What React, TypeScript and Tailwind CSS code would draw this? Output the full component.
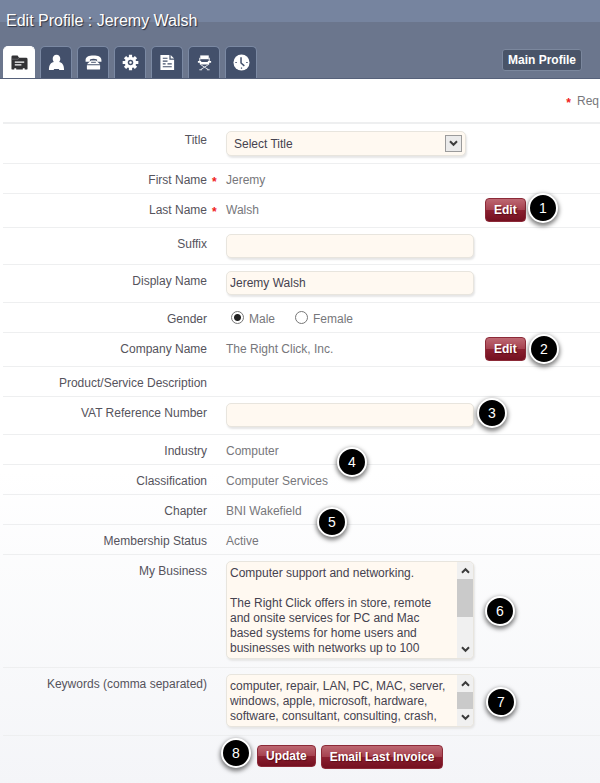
import { useState } from "react";
import type { ReactNode } from "react";
import clsx from "clsx";

const tabs = [
  {
    name: "Profile",
    icon: (
      <>
        <path d="M.5 3q0-1.500 1.500-1.500h5L8.500 4H16q1.500 0 1.500 1.500V16q0 .5-.5.5h-2.500V15h-2v1.500h-7V15h-2v1.500H1q-.5 0-.5-.5z" fill="#333336" />
        <path d="M.5 5.500h7L8.500 4" fill="none" stroke="#77777a" strokeWidth=".7" />
        <path d="M4 8.500h10M4 11.500h7" stroke="#fff" strokeWidth="1.300" />
      </>
    ),
  },
  {
    name: "Personal",
    icon: (
      <path
        d="M9 .8c2.600 0 4 1.800 4 4.200 0 1.500-.5 2.600-1.300 3.500 3.200.3 5.300 2.900 5.300 8.500h-5l-.5-1h-5l-.5 1H1c0-5.600 2.100-8.200 5.300-8.500C5.500 7.600 5 6.500 5 5 5 2.600 6.400.8 9 .8z"
        fill="#fff"
      />
    ),
  },
  {
    name: "Contact",
    icon: (
      <>
        <path
          d="M.6 6.500C.6 3 4 1.500 9 1.500s8.400 1.500 8.400 5v1.800h-4.600V5.800Q11 5 9 5t-3.800.8v2.500H.6z"
          fill="#fff"
        />
        <path d="M6.300 6.800h5.400l4.300 4H2zM2 12h14v3.500q0 1-1 1H3q-1 0-1-1z" fill="#fff" />
        <path d="M6.500 8.800h5" stroke="#43506b" />
      </>
    ),
  },
  {
    name: "Settings",
    icon: (
      <>
        <g stroke="#fff" strokeWidth="3.400">
          <path d="M9 .7v16.600M.7 9h16.600M3.200 3.200l11.600 11.600M14.800 3.200L3.200 14.800" />
        </g>
        <circle cx="9" cy="9" r="6" fill="#fff" />
        <circle cx="9" cy="9" r="2.900" fill="#43506b" />
        <circle cx="9" cy="9" r="1.300" fill="#fff" />
      </>
    ),
  },
  {
    name: "Documents",
    icon: (
      <>
        <path d="M1.500 1h9.500v5h5v11H1.500z" fill="#fff" />
        <path d="M12.300 1L16 4.800h-3.700z" fill="#fff" />
        <path d="M4 4.500h5M4 7.500h5M4 10.500h3M9 10.500h4.500M4 13.500h9.500" stroke="#43506b" strokeWidth="1.300" />
      </>
    ),
  },
  {
    name: "Training",
    icon: (
      <>
        <path d="M4.500 1.500h9v4h-9z" fill="#fff" />
        <path d="M4 4v4M14 4v4" stroke="#fff" />
        <path d="M2 7.500h3.500v1h7v-1H16v1.800h-2V11H4V9.300H2z" fill="#fff" />
        <path d="M4.500 11l8.500 5.500M13.500 11L5 16.500M3.500 16.700h3M11.500 16.700h3" stroke="#dfe3ea" />
      </>
    ),
  },
  {
    name: "History",
    icon: (
      <>
        <circle cx="9" cy="9" r="8.500" fill="#fff" />
        <path d="M8.500 3.500v6l3.500 3" fill="none" stroke="#43506b" strokeWidth="1.600" />
        <path d="M2.500 9H4M14 9h1.500M9 14.300v1.300" stroke="#43506b" strokeWidth="1.300" />
      </>
    ),
  },
];

const business = `Computer support and networking.

The Right Click offers in store, remote and onsite services for PC and Mac based systems for home users and businesses with networks up to 100`;

const keywords =
  "computer, repair, LAN, PC, MAC, server, windows, apple, microsoft, hardware, software, consultant, consulting, crash,";

const fieldBox =
  "rounded-[5px] border border-[#e8e5de] bg-[#fff9f1] text-[#45424f] shadow-[1px_2px_2px_#e6e6e6] outline-none";

function Badge({ n, className }: { n: number; className: string }) {
  return (
    <span
      className={clsx(
        "absolute flex size-[30px] items-center justify-center rounded-full border-2 border-white bg-black text-sm text-white shadow-[0_2px_4px_1px_rgba(0,0,0,0.5)]",
        className
      )}
    >
      {n}
    </span>
  );
}

function Row({
  label,
  htmlFor,
  required,
  className = "pt-1.5 pb-[3px]",
  children,
}: {
  label?: string;
  htmlFor?: string;
  required?: boolean;
  className?: string;
  children?: ReactNode;
}) {
  return (
    <div className="grid grid-cols-[204px_19px_1fr] border-b border-[#eeeff0]">
      <div className="pt-1.5 text-right text-[#55535c]">
        {htmlFor ? <label htmlFor={htmlFor}>{label}</label> : label}
      </div>
      <div className="pt-2 pl-[5px] font-bold text-[#f02020]">{required && "*"}</div>
      <div className={clsx("relative text-[#77777b]", className)}>{children}</div>
    </div>
  );
}

function RedButton({ children, className }: { children: ReactNode; className?: string }) {
  return (
    <button
      type="button"
      className={clsx(
        "rounded-[4px] border border-[#8c2a38] bg-[linear-gradient(#bd6872,#a5414f_50%,#8b2030_50%,#741020)] px-2 font-bold text-white [text-shadow:1px_1px_1px_#5a0d18]",
        className
      )}
    >
      {children}
    </button>
  );
}

function Chevron({ up }: { up?: boolean }) {
  return (
    <svg viewBox="0 0 9 7" className={clsx("h-[7px] w-[9px]", up && "rotate-180")}>
      <path d="M1 1.200l3.500 3.600L8 1.200" fill="none" stroke="#3c3c3c" strokeWidth="2" />
    </svg>
  );
}

function ScrollText({
  id,
  text,
  height,
  thumb,
}: {
  id: string;
  text: string;
  height: string;
  thumb: string;
}) {
  return (
    <div className={clsx("flex w-[248px] overflow-hidden", fieldBox, height)}>
      <textarea
        id={id}
        defaultValue={text}
        className="min-w-0 flex-1 resize-none overflow-hidden pt-1 pr-2 pl-[3px] leading-[15px] outline-none"
      />
      <div className="flex w-4 flex-col items-center bg-[#f0f0f0]">
        <span className="flex h-[17px] items-center">
          <Chevron up />
        </span>
        <span className={clsx("w-full bg-[#cacaca]", thumb)} />
        <span className="mt-auto flex h-[17px] items-center">
          <Chevron />
        </span>
      </div>
    </div>
  );
}

export default function App() {
  const [active, setActive] = useState("Profile");
  const [gender, setGender] = useState("Male");

  return (
    <div className="min-h-screen bg-[linear-gradient(#fff_60%,#f4f5f8)] font-['Liberation_Sans',Arial,sans-serif] text-xs leading-5">
      <header className="border-b border-[#56617a] bg-[linear-gradient(#76849f_22px,#6b768d_22px)] pt-[9px]">
        <h1 className="px-1.5 text-base leading-6 text-white [text-shadow:1px_1px_1px_#2b3140]">
          Edit Profile : Jeremy Walsh
        </h1>
        <div className="flex justify-between pt-[13px] pr-[18px] pl-[3px]">
          <nav className="flex gap-[5px]">
            {tabs.map((tab) => (
              <button
                key={tab.name}
                type="button"
                aria-label={tab.name}
                onClick={() => setActive(tab.name)}
                className={clsx(
                  "flex h-8 w-8 items-center justify-center rounded-t-[5px] border border-b-0",
                  active === tab.name
                    ? "-mb-px border-white bg-white"
                    : "border-[#7b89a3] bg-[#43506b]"
                )}
              >
                <svg viewBox="0 0 18 18" className="size-[17px]">
                  {tab.icon}
                </svg>
              </button>
            ))}
          </nav>
          <button
            type="button"
            className="mt-[3px] h-[22px] self-start rounded-[3px] border border-[#7b879d] bg-[#495468] px-[5px] font-bold text-white"
          >
            Main Profile
          </button>
        </div>
      </header>

      <form className="pl-[3px]">
        <div className="flex justify-end gap-1.5 border-b-2 border-[#eeeff0] pt-3 pr-px pb-[9px] text-[#77777b]">
          <span className="pt-0.5 font-bold text-[#f02020]">*</span>
          <span>Req</span>
        </div>

        <Row label="Title" htmlFor="title" className="pt-[7px] pb-[7px]">
          <div className="relative w-[240px]">
            <select id="title" className={clsx("block h-[25px] w-full appearance-none pl-[7px]", fieldBox)}>
              <option>Select Title</option>
            </select>
            <span className="pointer-events-none absolute top-1 right-1 flex h-[17px] w-[17px] items-center justify-center border border-[#9b9b9b] bg-[#ebebeb]">
              <Chevron />
            </span>
          </div>
        </Row>
        <Row label="First Name" required>
          Jeremy
        </Row>
        <Row label="Last Name" required className="flex pt-1 pb-[5px]">
          <span className="w-[259px] pt-0.5">Walsh</span>
          <RedButton className="h-6">Edit</RedButton>
          <Badge n={1} className="-top-px left-[302px]" />
        </Row>
        <Row label="Suffix" htmlFor="suffix" className="pt-1.5 pb-1.5">
          <input id="suffix" type="text" className={clsx("block h-6 w-[248px] px-[3px]", fieldBox)} />
        </Row>
        <Row label="Display Name" htmlFor="display" className="pt-1.5 pb-[7px]">
          <input
            id="display"
            type="text"
            defaultValue="Jeremy Walsh"
            className={clsx("block h-6 w-[248px] px-[3px]", fieldBox)}
          />
        </Row>
        <Row label="Gender" className="flex gap-5 pt-1.5 pb-[3px] pl-[5px]">
          {["Male", "Female"].map((g) => (
            <label key={g} className="flex gap-[5px]">
              <input
                type="radio"
                name="gender"
                checked={gender === g}
                onChange={() => setGender(g)}
                className="mt-[2px] size-[13px] appearance-none rounded-full border border-[#777] bg-white checked:bg-[radial-gradient(#222_3px,#fff_4px)]"
              />
              {g}
            </label>
          ))}
        </Row>
        <Row label="Company Name" className="flex pt-1 pb-[5px]">
          <span className="w-[259px] pt-0.5">The Right Click, Inc.</span>
          <RedButton className="h-6">Edit</RedButton>
          <Badge n={2} className="top-px left-[303px]" />
        </Row>
        <Row label="Product/Service Description" className="pt-[29px]" />
        <Row label="VAT Reference Number" htmlFor="vat" className="pt-1.5 pb-[7px]">
          <input id="vat" type="text" className={clsx("block h-6 w-[248px] px-[3px]", fieldBox)} />
          <Badge n={3} className="top-px left-[251px]" />
        </Row>
        <Row label="Industry">
          Computer
          <Badge n={4} className="top-3 left-[111px] z-10" />
        </Row>
        <Row label="Classification">Computer Services</Row>
        <Row label="Chapter">
          BNI Wakefield
          <Badge n={5} className="top-3 left-[91px] z-10" />
        </Row>
        <Row label="Membership Status">Active</Row>
        <Row label="My Business" htmlFor="business" className="pt-1.5 pb-2">
          <ScrollText id="business" text={business} height="h-[98px]" thumb="h-[38px]" />
          <Badge n={6} className="top-[41px] left-[259px]" />
        </Row>
        <Row label="Keywords (comma separated)" htmlFor="keywords" className="pt-1.5 pb-2">
          <ScrollText id="keywords" text={keywords} height="h-[53px]" thumb="h-[17px]" />
          <Badge n={7} className="top-[19px] left-[260px]" />
        </Row>
        <div className="relative ml-[223px] flex items-start gap-[5px] pt-[9px] pb-4 pl-[31px]">
          <Badge n={8} className="top-0.5 -left-[5px]" />
          <RedButton className="h-[22px]">Update</RedButton>
          <RedButton className="h-6">Email Last Invoice</RedButton>
        </div>
      </form>
    </div>
  );
}
